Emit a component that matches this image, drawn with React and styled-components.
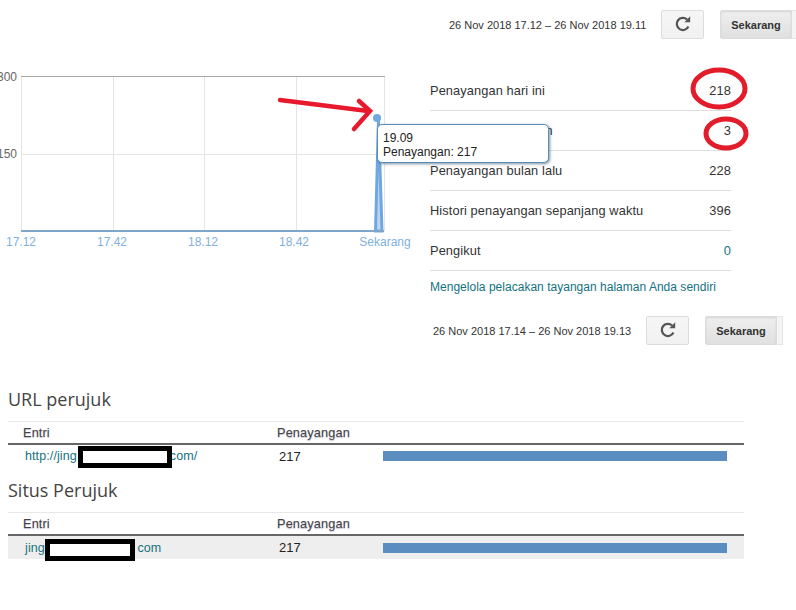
import React from "react";
import styled, { createGlobalStyle } from "styled-components";

const GlobalStyle = createGlobalStyle`
  html, body {
    margin: 0;
    padding: 0;
    background: #fff;
    overflow: hidden;
  }

  body {
    font-family: "Liberation Sans", Arial, sans-serif;
    color: #333;
  }
`;

const Page = styled.div`
  box-sizing: border-box;
  width: 796px;
  height: 610px;
  padding-top: 10px;
  overflow: hidden;
`;

const DateBar = styled.div`
  display: flex;
  align-items: center;
  height: 28px;
  padding-left: ${(p) => p.$left}px;
  white-space: nowrap;
`;

const DateText = styled.span`
  flex: none;
  width: ${(p) => p.$width}px;
  padding-top: 1px;
  font-size: 11px;
  color: #333;
`;

const RefreshButton = styled.button`
  display: flex;
  align-items: center;
  justify-content: center;
  box-sizing: border-box;
  flex: none;
  width: 43px;
  height: 29px;
  padding: 0;
  margin-right: 16px;
  background: linear-gradient(#f6f6f6, #f1f1f1);
  border: 1px solid #dcdcdc;
  border-radius: 2px;
`;

const NowButton = styled.button`
  box-sizing: border-box;
  flex: none;
  width: 72px;
  height: 29px;
  padding: 1px 0 0;
  font-family: inherit;
  font-size: 11px;
  font-weight: bold;
  color: #333;
  background: linear-gradient(#eeeeee, #e0e0e0);
  border: 1px solid #dcdcdc;
  border-radius: 2px 0 0 2px;
  box-shadow: inset 0 1px 2px rgba(0, 0, 0, 0.1);
`;

const ButtonStub = styled.span`
  flex: none;
  box-sizing: border-box;
  width: ${(p) => p.$width}px;
  height: 29px;
  background: #f4f4f4;
  border: 1px solid #e6e6e6;
  border-left: none;
`;

const TopSection = styled.section`
  display: flex;
  margin-top: 22px;
`;

const ChartPanel = styled.div`
  position: relative;
  flex: none;
  width: 420px;
  height: 200px;
`;

const Tooltip = styled.div`
  position: absolute;
  z-index: 2;
  left: 377px;
  top: 64px;
  box-sizing: border-box;
  width: 172px;
  height: 39px;
  padding: 6px 5px;
  font-size: 12px;
  line-height: 14px;
  color: #222;
  background: #fff;
  border: 1px solid #5b8db8;
  border-radius: 5px;
  box-shadow: 1px 1px 3px rgba(40, 70, 100, 0.6);
`;

const StatsPanel = styled.div`
  flex: none;
  width: 301px;
  margin-left: 10px;
  padding-top: 11px;
`;

const StatRow = styled.div`
  position: relative;
  display: flex;
  align-items: center;
  justify-content: space-between;
  box-sizing: border-box;
  height: 40px;
  font-size: 12.8px;
  letter-spacing: 0.1px;
  color: #333;
  border-bottom: 1px solid #dedede;
`;

const StatValue = styled.span`
  color: ${(p) => (p.$link ? "#14727f" : "#333")};
`;

const Ring = styled.svg`
  position: absolute;
  right: ${(p) => p.$right}px;
  top: ${(p) => p.$top}px;
  overflow: visible;
`;

const ManageLink = styled.a`
  display: block;
  margin-top: 9px;
  font-size: 12px;
  letter-spacing: 0.02px;
  line-height: 14px;
  color: #14727f;
`;

const SecondBar = styled.div`
  margin-top: 22px;
`;

const Referrers = styled.section`
  width: 736px;
  margin: 43px 0 0 8px;
`;

const Heading = styled.h2`
  box-sizing: border-box;
  margin: 0;
  height: ${(p) => p.$height}px;
  padding-top: ${(p) => p.$top || 0}px;
  font-family: "Open Sans", sans-serif;
  font-size: 18px;
  font-weight: 400;
  line-height: 24px;
  color: #444;
`;

const TableHead = styled.div`
  display: grid;
  grid-template-columns: 269px 1fr;
  align-items: center;
  box-sizing: border-box;
  height: 24px;
  font-size: 12.8px;
  letter-spacing: 0.1px;
  color: #444;
  text-shadow: 0 1px 1px rgba(90, 80, 140, 0.4);
  border-top: 1px solid #e8e8e8;
  border-bottom: 2px solid #666;

  span:first-child {
    padding-left: 15px;
  }
`;

const TableRow = styled.div`
  display: grid;
  grid-template-columns: 269px 106px 344px;
  align-items: center;
  height: ${(p) => p.$height}px;
  font-size: 12.5px;
  background: ${(p) => (p.$shaded ? "#eeeeee" : "#fff")};
`;

const EntryLink = styled.a`
  display: flex;
  align-items: center;
  padding-left: 17px;
  color: #14727f;
  letter-spacing: 0.1px;
`;

const Redaction = styled.span`
  box-sizing: border-box;
  flex: none;
  width: ${(p) => p.$width}px;
  height: 22px;
  margin-right: -1px;
  background: #fff;
  border: 5px solid #000;
  transform: translate(${(p) => p.$x || 0}px, ${(p) => p.$y}px);
`;

const CountCell = styled.span`
  padding-left: 2px;
  font-size: 13px;
  color: #222;
`;

const Bar = styled.div`
  height: 10px;
  background: #5b8dc1;
`;

const RefreshIcon = () => (
  <svg width="18" height="18" viewBox="0 0 16 16">
    <path
      d="M12.8 10.2A5.4 5.4 0 1 1 11.6 4"
      fill="none"
      stroke="#555"
      strokeWidth="2"
    />
    <path d="M9.2 6.4 14.4 6.4 14.4 1.2Z" fill="#555" />
  </svg>
);

const Chart = () => (
  <svg width="420" height="200" viewBox="0 60 420 200">
    <g stroke="#e4e4e4" fill="none">
      <path d="M21.5 76V231M113.5 76V231M204.5 76V231M296.5 76V231M384.5 76V231" />
      <path d="M21 154.5H385" />
    </g>
    <path d="M21 76.5H385" stroke="#a8a8a8" />
    <g fontSize="12" fill="#666" textAnchor="end">
      <text x="17" y="81">300</text>
      <text x="17" y="158">150</text>
    </g>
    <path
      d="M375.5 231 378.5 120 382 231Z"
      fill="#bcd6f0"
      stroke="#6fa8e0"
      strokeWidth="3"
    />
    <path d="M21 231H384" stroke="#7fa6c9" strokeWidth="2" />
    <circle cx="377" cy="118" r="4" fill="#6fa8e0" />
    <g fontSize="12" fill="#7fb0e0" textAnchor="middle">
      <text x="21" y="246">17.12</text>
      <text x="112" y="246">17.42</text>
      <text x="203" y="246">18.12</text>
      <text x="294" y="246">18.42</text>
      <text x="385" y="246">Sekarang</text>
    </g>
    <g fill="none" stroke="#e8192c" strokeWidth="4.5" strokeLinecap="round">
      <path d="M280 100 368 111" />
      <path d="M359 101 370 111 354 129" />
    </g>
  </svg>
);

const Toolbar = ({ left, width, stub, text }) => (
  <DateBar $left={left}>
    <DateText $width={width}>{text}</DateText>
    <RefreshButton>
      <RefreshIcon />
    </RefreshButton>
    <NowButton>Sekarang</NowButton>
    <ButtonStub $width={stub} />
  </DateBar>
);

const stats = [
  { label: "Penayangan hari ini", value: "218", ring: { w: 52, h: 37, right: -14, top: -1 } },
  { label: "Penayangan kemarin", value: "3", ring: { w: 40, h: 29, right: -15, top: 8 } },
  { label: "Penayangan bulan lalu", value: "228" },
  { label: "Histori penayangan sepanjang waktu", value: "396" },
  { label: "Pengikut", value: "0", link: true },
];

export default function App() {
  return (
    <Page>
      <GlobalStyle />
      <Toolbar
        left={449}
        width={212}
        stub={10}
        text="26 Nov 2018 17.12 – 26 Nov 2018 19.11"
      />
      <TopSection>
        <ChartPanel>
          <Chart />
          <Tooltip>
            19.09
            <br />
            Penayangan: 217
          </Tooltip>
        </ChartPanel>
        <StatsPanel>
          {stats.map((s) => (
            <StatRow key={s.label}>
              <span>{s.label}</span>
              <StatValue $link={s.link}>{s.value}</StatValue>
              {s.ring && (
                <Ring
                  $right={s.ring.right}
                  $top={s.ring.top}
                  width={s.ring.w}
                  height={s.ring.h}
                >
                  <ellipse
                    cx={s.ring.w / 2}
                    cy={s.ring.h / 2}
                    rx={s.ring.w / 2}
                    ry={s.ring.h / 2}
                    fill="none"
                    stroke="#e31c2b"
                    strokeWidth="5"
                  />
                </Ring>
              )}
            </StatRow>
          ))}
          <ManageLink>Mengelola pelacakan tayangan halaman Anda sendiri</ManageLink>
        </StatsPanel>
      </TopSection>
      <SecondBar>
        <Toolbar
          left={433}
          width={213}
          stub={6}
          text="26 Nov 2018 17.14 – 26 Nov 2018 19.13"
        />
      </SecondBar>
      <Referrers>
        <Heading $height={34}>URL perujuk</Heading>
        <TableHead>
          <span>Entri</span>
          <span>Penayangan</span>
        </TableHead>
        <TableRow $height={22}>
          <EntryLink>
            http://jing
            <Redaction $width={94} $x={1} $y={1} />
            com/
          </EntryLink>
          <CountCell>217</CountCell>
          <Bar />
        </TableRow>
        <Heading $height={45} $top={11}>
          Situs Perujuk
        </Heading>
        <TableHead>
          <span>Entri</span>
          <span>Penayangan</span>
        </TableHead>
        <TableRow $height={23} $shaded>
          <EntryLink>
            jing
            <Redaction $width={90} $y={2} />
            &nbsp;com
          </EntryLink>
          <CountCell>217</CountCell>
          <Bar />
        </TableRow>
      </Referrers>
    </Page>
  );
}
